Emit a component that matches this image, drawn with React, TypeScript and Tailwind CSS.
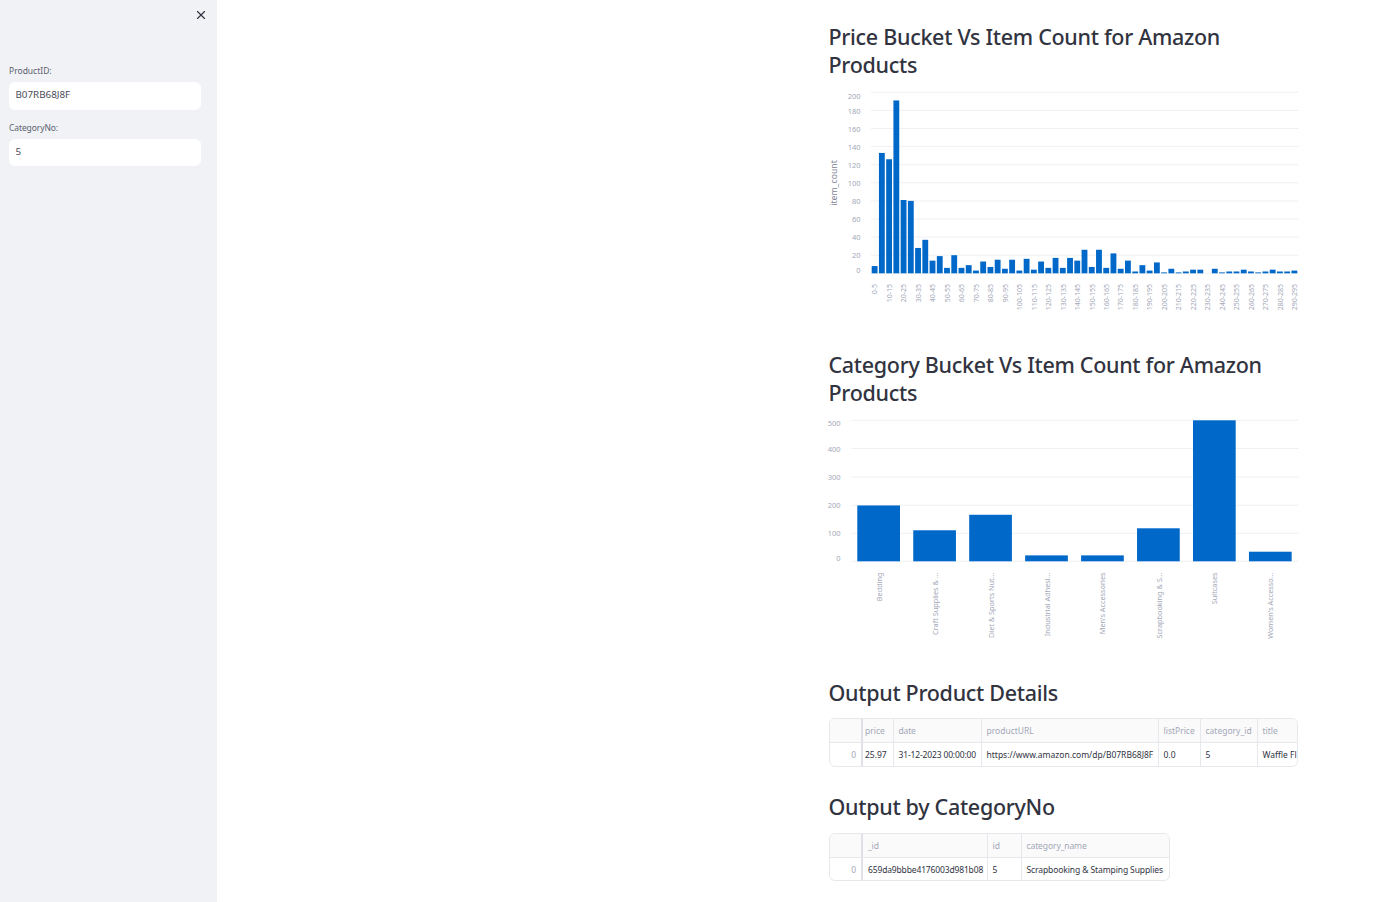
import { X } from 'lucide-react'

const PRICE_COUNTS = [
  8, 133, 126, 191, 81, 80, 28, 37, 14, 19, 6, 20, 6, 9, 3, 13, 7, 15, 5, 15,
  3, 16, 4, 13, 6, 17, 6, 17, 14, 26, 7, 26, 6, 22, 5, 14, 2, 9, 3, 12,
  1, 5, 1, 2, 4, 4, 0, 5, 1, 2, 2, 4, 2, 1, 2, 4, 2, 2, 3,
]

const PRICE_TICKS = [
  { v: 200, grid: 92.3, y: 99 },
  { v: 180, grid: 110.4, y: 113.8 },
  { v: 160, grid: 128.5, y: 131.8 },
  { v: 140, grid: 146.6, y: 149.8 },
  { v: 120, grid: 164.7, y: 167.8 },
  { v: 100, grid: 182.8, y: 186.3 },
  { v: 80, grid: 200.9, y: 204.3 },
  { v: 60, grid: 219, y: 222.3 },
  { v: 40, grid: 237.1, y: 240.3 },
  { v: 20, grid: 255.2, y: 258.3 },
  { v: 0, grid: 273.3, y: 272.8 },
]

const CATEGORY_BARS = [
  { label: 'Bedding', value: 198, labelX: 878.5 },
  { label: 'Craft Supplies & …', value: 110, labelX: 934.5 },
  { label: 'Diet & Sports Nut…', value: 165, labelX: 990 },
  { label: 'Industrial Adhesi…', value: 21, labelX: 1046 },
  { label: "Men's Accessories", value: 21, labelX: 1101.5 },
  { label: 'Scrapbooking & S…', value: 117, labelX: 1158 },
  { label: 'Suitcases', value: 500, labelX: 1213 },
  { label: "Women's Accesso…", value: 34, labelX: 1269.5 },
]

const CATEGORY_TICKS = [
  { v: 500, grid: 420.3, y: 426.4 },
  { v: 400, grid: 448.5, y: 451.8 },
  { v: 300, grid: 477, y: 479.8 },
  { v: 200, grid: 505.3, y: 508.3 },
  { v: 100, grid: 533.3, y: 536.3 },
  { v: 0, grid: 561.3, y: 561.3 },
]

function PriceChart() {
  const left = 870.5
  const step = 427 / 59
  return (
    <svg width="469" height="228" viewBox="828.5 88 469 228" className="mt-[9px] block overflow-visible">
      {PRICE_TICKS.map(t => (
        <g key={t.v}>
          <line x1={left} x2="1298" y1={t.grid} y2={t.grid} stroke="#eff0f4" strokeWidth="1" />
          <text x="860" y={t.y} textAnchor="end" className="fill-[#a3a8b8] text-[7.5px]">{t.v}</text>
        </g>
      ))}
      {PRICE_COUNTS.map((c, i) => (
        <rect key={i} x={left + i * step + 0.7} width={step - 1.4} y={273.3 - c * 0.905} height={c * 0.905} fill="#0068c9" />
      ))}
      {PRICE_COUNTS.map((_, i) => {
        if (i % 2) return null
        const x = left + i * step + step / 2 + 2.8
        return (
          <text key={i} transform={`translate(${x} 284) rotate(-90)`} textAnchor="end" className="fill-[#a3a8b8] text-[7px]">
            {`${i * 5}-${i * 5 + 5}`}
          </text>
        )
      })}
      <text transform="translate(836 183) rotate(-90)" textAnchor="middle" className="fill-[#808495] text-[8.7px]">
        item_count
      </text>
    </svg>
  )
}

function CategoryChart() {
  return (
    <svg width="469" height="228" viewBox="828.5 416 469 228" className="mt-[9px] block overflow-visible">
      {CATEGORY_TICKS.map(t => (
        <g key={t.v}>
          <line x1="851" x2="1298" y1={t.grid} y2={t.grid} stroke="#eff0f4" strokeWidth="1" />
          <text x="840" y={t.y} textAnchor="end" className="fill-[#a3a8b8] text-[7.5px]">{t.v}</text>
        </g>
      ))}
      {CATEGORY_BARS.map((b, i) => {
        const h = b.value * 0.282
        return <rect key={b.label} x={856.8 + i * 55.95} width="42.7" y={561.3 - h} height={h} fill="#0068c9" />
      })}
      {CATEGORY_BARS.map(b => (
        <text key={b.label} transform={`translate(${b.labelX + 3} 572.5) rotate(-90)`} textAnchor="end" className="fill-[#a3a8b8] text-[7.3px]">
          {b.label}
        </text>
      ))}
    </svg>
  )
}

function DataTable({ className, columns, row }: {
  className: string
  columns: { name: string; width: string; pad: string }[]
  row: string[]
}) {
  return (
    <div className={`overflow-hidden rounded-md border border-[#e6e8ec] text-[8.5px] ${className}`}>
      <div className="flex h-6 border-b border-[#e6e8ec] bg-[#fafafa] text-[#a3a8b8]">
        <div className="w-[33.5px] shrink-0 border-r-2 border-[#dfe1e6]" />
        {columns.map(c => (
          <div key={c.name} className={`flex shrink-0 items-center overflow-hidden border-r border-[#e6e8ec] pt-[1px] last:border-r-0 ${c.pad} ${c.width}`}>
            {c.name}
          </div>
        ))}
      </div>
      <div className="flex h-[24px] text-[#31333f]">
        <div className="flex w-[33.5px] shrink-0 items-center justify-end border-r-2 border-[#dfe1e6] pr-[5px] text-[#a3a8b8]">0</div>
        {row.map((v, i) => (
          <div key={i} className={`flex shrink-0 items-center overflow-hidden whitespace-nowrap border-r border-[#e6e8ec] last:border-r-0 ${columns[i].pad} ${columns[i].width}`}>
            {v}
          </div>
        ))}
      </div>
    </div>
  )
}

function Heading({ children, className }: { children: React.ReactNode; className: string }) {
  return (
    <h3 className={`text-[21.5px] leading-[28px] font-medium tracking-[-0.3px] text-[#31333f] ${className}`}>
      {children}
    </h3>
  )
}

export default function App() {
  return (
    <div className="flex h-[902px] overflow-hidden bg-white font-['Noto_Sans',sans-serif]">
      <aside className="flex w-[217px] shrink-0 flex-col bg-[#f0f2f6] px-[9px]">
        <div className="flex justify-end pt-[8px] pr-[0.5px]">
          <X size={14} strokeWidth={2} className="text-[#31333f]" />
        </div>
        <label className="mt-[43px] text-[8.5px] leading-[12px] text-[#5c5f6e]">ProductID:</label>
        <div className="mt-[5px] flex h-[28px] w-[192px] items-center rounded-md bg-white pb-[2px] pl-[6.5px] text-[9.8px] text-[#4a4c58]">
          B07RB68J8F
        </div>
        <label className="mt-[12px] text-[8.5px] tracking-[-0.1px] leading-[12px] text-[#5c5f6e]">CategoryNo:</label>
        <div className="mt-[5px] flex h-[27px] w-[192px] items-center rounded-md bg-white pb-[1px] pl-[6.5px] text-[9.8px] text-[#4a4c58]">
          5
        </div>
      </aside>

      <main className="pt-[23px] pl-[611.5px]">
        <div className="w-[469px]">
          <Heading className="">Price Bucket Vs Item Count for Amazon Products</Heading>
          <PriceChart />

          <Heading className="mt-[35px]">Category Bucket Vs Item Count for Amazon Products</Heading>
          <CategoryChart />

          <Heading className="mt-[35px]">Output Product Details</Heading>
          <DataTable
            className="mt-[11px] h-[49px] w-[469.5px]"
            columns={[
              { name: 'price', width: 'w-[31px]', pad: 'pl-[2px]' },
              { name: 'date', width: 'w-[88px]', pad: 'pl-[4.5px] tracking-[-0.15px]' },
              { name: 'productURL', width: 'w-[177px]', pad: 'pl-[4.5px]' },
              { name: 'listPrice', width: 'w-[42px]', pad: 'pl-[4.5px]' },
              { name: 'category_id', width: 'w-[57px]', pad: 'pl-[4.5px]' },
              { name: 'title', width: 'w-[40px]', pad: 'pl-[4.5px]' },
            ]}
            row={['25.97', '31-12-2023 00:00:00', 'https://www.amazon.com/dp/B07RB68J8F', '0.0', '5', 'Waffle Fl']}
          />

          <Heading className="mt-[26px]">Output by CategoryNo</Heading>
          <DataTable
            className="mt-[12px] h-[48px] w-[341.5px]"
            columns={[
              { name: '_id', width: 'w-[125px]', pad: 'pl-[5px] tracking-[-0.15px]' },
              { name: 'id', width: 'w-[34px]', pad: 'pl-[4.5px]' },
              { name: 'category_name', width: 'w-[148px]', pad: 'pl-[4.5px] tracking-[-0.1px]' },
            ]}
            row={['659da9bbbe4176003d981b08', '5', 'Scrapbooking & Stamping Supplies']}
          />
        </div>
      </main>
    </div>
  )
}
